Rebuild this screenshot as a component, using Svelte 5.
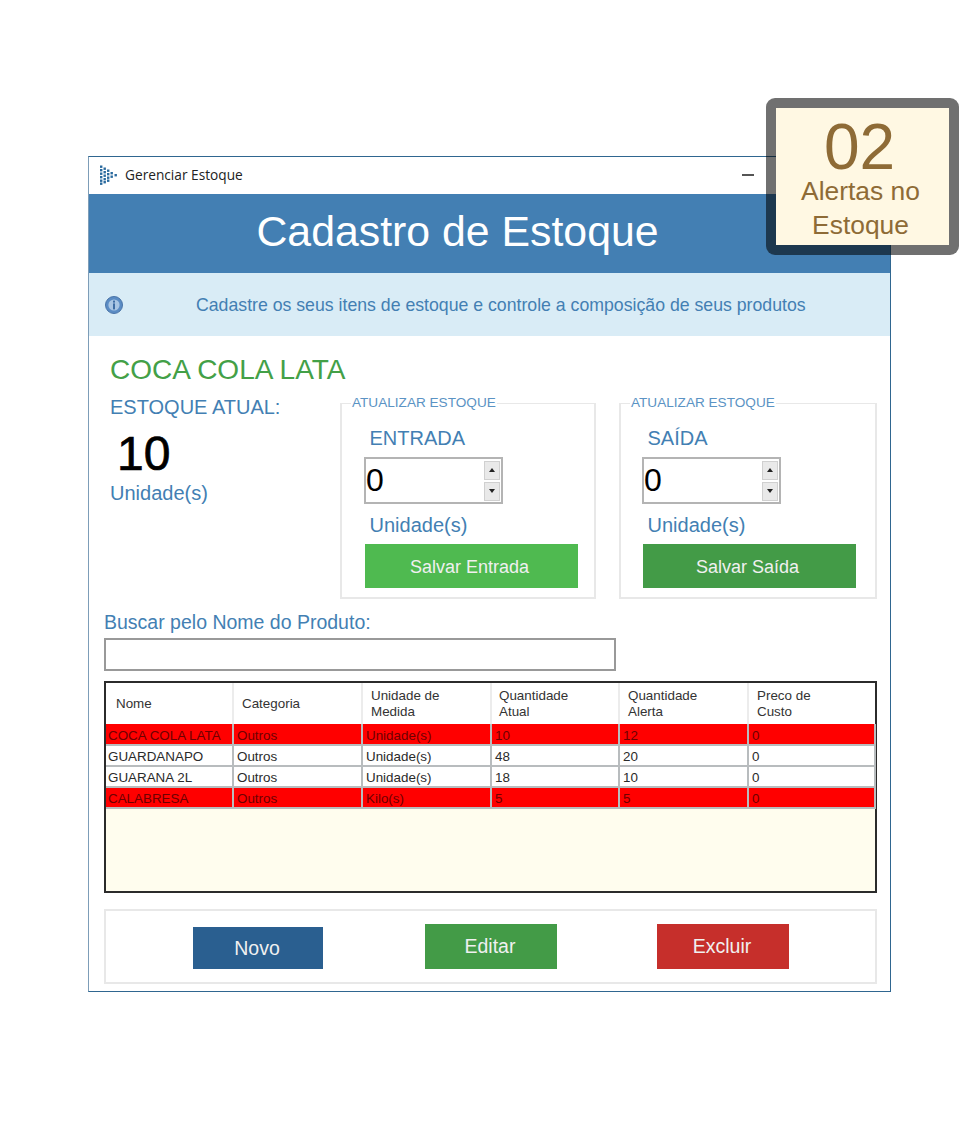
<script>
	const rows = [
		{ nome: 'COCA COLA LATA', categoria: 'Outros', unidade: 'Unidade(s)', atual: 10, alerta: 12, custo: 0, low: true },
		{ nome: 'GUARDANAPO', categoria: 'Outros', unidade: 'Unidade(s)', atual: 48, alerta: 20, custo: 0, low: false },
		{ nome: 'GUARANA 2L', categoria: 'Outros', unidade: 'Unidade(s)', atual: 18, alerta: 10, custo: 0, low: false },
		{ nome: 'CALABRESA', categoria: 'Outros', unidade: 'Kilo(s)', atual: 5, alerta: 5, custo: 0, low: true }
	];

	const groups = [
		{ label: 'ENTRADA', button: 'Salvar Entrada', tone: 'light' },
		{ label: 'SAÍDA', button: 'Salvar Saída', tone: 'dark' }
	];

	// dots of the little triangular logo in the title bar
	const dots = [
		[1, 0.5], [1, 4], [1, 7.5], [1, 11], [1, 14.5], [1, 17.5],
		[4.5, 2.5], [4.5, 6], [4.5, 9.5], [4.5, 13], [4.5, 16],
		[8, 4.5], [8, 8], [8, 11.5], [8, 14.5],
		[11.5, 7], [11.5, 10.5], [15.5, 9]
	];
</script>

<div class="page">
	<div class="window">
		<div class="titlebar">
			<svg class="logo" width="18" height="20" viewBox="0 0 18 20">
				{#each dots as [x, y]}
					<rect x={x} y={y} width="2.4" height="2.4" fill="#2a6a9e" />
				{/each}
			</svg>
			<span class="title">Gerenciar Estoque</span>
			<span class="minimize"></span>
		</div>

		<header class="banner">Cadastro de Estoque</header>

		<div class="info">
			<svg class="info-icon" width="18" height="18" viewBox="0 0 18 18">
				<circle cx="9" cy="9" r="8.5" fill="#5b8cc4" stroke="#4a74a8" />
				<circle cx="9" cy="9" r="5.6" fill="#a9c6e4" />
				<rect x="8" y="4.6" width="2" height="2" fill="#3f6ea5" />
				<rect x="8" y="7.4" width="2" height="6" fill="#3f6ea5" />
			</svg>
			<p>Cadastre os seus itens de estoque e controle a composição de seus produtos</p>
		</div>

		<main class="content">
			<div class="top">
				<section class="current">
					<h2>COCA COLA LATA</h2>
					<div class="current-label">ESTOQUE ATUAL:</div>
					<div class="current-value">10</div>
					<div class="current-unit">Unidade(s)</div>
				</section>

				{#each groups as group}
					<fieldset class="group">
						<legend>ATUALIZAR ESTOQUE</legend>
						<div class="group-label">{group.label}</div>
						<div class="spinner">
							<span class="spinner-value">0</span>
							<span class="spinner-buttons">
								<span class="spin"><i class="up"></i></span>
								<span class="spin"><i class="down"></i></span>
							</span>
						</div>
						<div class="group-label unit">Unidade(s)</div>
						<button class="save {group.tone}">{group.button}</button>
					</fieldset>
				{/each}
			</div>

			<label class="search-label" for="busca">Buscar pelo Nome do Produto:</label>
			<input id="busca" class="search" type="text" />

			<div class="grid">
				<table>
					<thead>
						<tr>
							<th class="pad">Nome</th>
							<th>Categoria</th>
							<th>Unidade de<br />Medida</th>
							<th>Quantidade<br />Atual</th>
							<th>Quantidade<br />Alerta</th>
							<th>Preco de<br />Custo</th>
						</tr>
					</thead>
					<tbody>
						{#each rows as row}
							<tr class:low={row.low}>
								<td>{row.nome}</td>
								<td>{row.categoria}</td>
								<td>{row.unidade}</td>
								<td>{row.atual}</td>
								<td>{row.alerta}</td>
								<td>{row.custo}</td>
							</tr>
						{/each}
					</tbody>
				</table>
			</div>

			<div class="actions">
				<button class="action novo">Novo</button>
				<button class="action editar">Editar</button>
				<button class="action excluir">Excluir</button>
			</div>
		</main>

		<aside class="alert">
			<div class="alert-count">02</div>
			<div class="alert-text">Alertas no<br />Estoque</div>
		</aside>
	</div>
</div>

<style>
	:global(body) {
		margin: 0;
		background: #fff;
	}

	.page {
		width: 960px;
		height: 1147px;
		padding: 156px 0 0 88px;
		box-sizing: border-box;
		font-family: 'Liberation Sans', Arial, sans-serif;
		overflow: hidden;
	}

	.window {
		position: relative;
		width: 803px;
		height: 836px;
		box-sizing: border-box;
		border: 1px solid #2f6690;
		border-left-color: #7d9db8;
		background: #fff;
	}

	.titlebar {
		display: flex;
		align-items: center;
		height: 37px;
		padding: 0 0 2px 10px;
		box-sizing: border-box;
	}

	.title {
		margin-left: 8px;
		font-family: 'Open Sans', sans-serif;
		font-size: 13.7px;
		color: #222;
	}

	.minimize {
		width: 12px;
		height: 2px;
		margin-left: 499px;
		background: #555;
	}

	.banner {
		height: 79px;
		line-height: 75px;
		background: #437fb3;
		color: #fff;
		font-size: 42.8px;
		text-align: center;
		padding-right: 64px;
	}

	.info {
		display: flex;
		align-items: center;
		height: 63px;
		padding-left: 16px;
		box-sizing: border-box;
		background: #d9ecf6;
	}

	.info p {
		margin: 0 0 0 73px;
		padding-top: 2px;
		font-size: 17.7px;
		color: #437fb3;
	}

	.content {
		padding-left: 15px;
	}

	.top {
		display: flex;
		height: 266px;
	}

	.current {
		width: 236px;
		padding: 18px 0 0 6px;
		box-sizing: border-box;
		color: #437fb3;
	}

	.current h2 {
		margin: 0;
		font-size: 28px;
		font-weight: 400;
		line-height: 32px;
		color: #43a047;
		white-space: nowrap;
	}

	.current-label,
	.current-unit {
		font-size: 20px;
		line-height: 24px;
	}

	.current-label {
		margin-top: 9px;
	}

	.current-value {
		margin: 10px 0 0 7px;
		font-size: 48px;
		line-height: 50px;
		color: #000;
		-webkit-text-stroke: 0.7px #000;
	}

	.current-unit {
		margin-top: 2px;
	}

	.group {
		position: relative;
		width: 256px;
		height: 196px;
		min-width: 0;
		margin: 67px 23px 0 0;
		padding: 0 0 0 23px;
		box-sizing: border-box;
		border: 2px solid #e8e8e8;
		border-top-width: 1px;
	}

	.group + .group {
		width: 258px;
		margin-right: 0;
		padding-left: 22px;
	}

	legend {
		position: absolute;
		top: -9px;
		left: 9px;
		padding: 0 1px;
		background: #fff;
		font-size: 13.6px;
		line-height: 16px;
		color: #5b93c4;
	}

	.group-label {
		margin: 21px 0 0 4.5px;
		font-size: 20px;
		line-height: 26px;
		color: #437fb3;
	}

	.group-label.unit {
		margin-top: 8px;
	}

	.spinner {
		display: flex;
		justify-content: space-between;
		align-items: center;
		width: 139px;
		height: 47px;
		margin: 6px 0 0 -1px;
		box-sizing: border-box;
		border: 2px solid #b4b4b4;
		background: #fff;
	}

	.spinner-value {
		font-size: 32px;
		color: #000;
	}

	.spinner-buttons {
		display: flex;
		flex-direction: column;
		gap: 2px;
		margin-right: 1px;
	}

	.spin {
		display: flex;
		align-items: center;
		justify-content: center;
		width: 16px;
		height: 19px;
		background: #e9e9e9;
		border: 1px solid #d0d0d0;
		box-sizing: border-box;
	}

	.spin i {
		width: 0;
		height: 0;
		border-left: 3.5px solid transparent;
		border-right: 3.5px solid transparent;
	}

	.up {
		border-bottom: 4px solid #222;
	}

	.down {
		border-top: 4px solid #222;
	}

	.save {
		display: block;
		width: 213px;
		height: 44px;
		margin-top: 6px;
		padding: 3px 4px 0 0;
		border: 0;
		color: #f0f0f0;
		font: 18px 'Liberation Sans', Arial, sans-serif;
	}

	.save.light {
		background: #4fba50;
	}

	.save.dark {
		background: #439b47;
	}

	.search-label {
		display: block;
		margin-top: 8px;
		font-size: 19.5px;
		line-height: 24px;
		color: #437fb3;
	}

	.search {
		display: block;
		width: 512px;
		height: 33px;
		margin-top: 4px;
		padding: 0;
		box-sizing: border-box;
		border: 2px solid #999;
		background: #fff;
	}

	.grid {
		width: 773px;
		height: 212px;
		margin-top: 10px;
		box-sizing: border-box;
		border: 2px solid #2b2b2b;
		background: #fffdee;
	}

	table {
		width: 100%;
		border-collapse: collapse;
		table-layout: fixed;
		font-size: 13.4px;
		color: #2a2a2a;
	}

	th {
		box-sizing: border-box;
		width: 129px;
		height: 41px;
		padding: 0 0 0 8px;
		border-right: 2px solid #ececec;
		background: #fff;
		font-weight: 400;
		line-height: 16px;
		text-align: left;
		color: #333;
	}

	th.pad {
		width: 127px;
		padding-left: 10px;
	}

	th:nth-child(4) {
		width: 128px;
		padding-left: 7px;
	}

	th:last-child {
		width: 127px;
		border-right: 0;
	}

	td {
		height: 21px;
		padding: 2px 0 0 3px;
		border: 2px solid #b8bcbe;
		border-width: 0 2px 2px 0;
		background: #fff;
		box-sizing: border-box;
		line-height: 17px;
		white-space: nowrap;
	}

	td:first-child {
		padding-left: 2px;
	}

	.low td {
		background: #ff0000;
		color: #6e0000;
	}

	.actions {
		display: flex;
		align-items: flex-end;
		width: 773px;
		height: 75px;
		margin-top: 16px;
		padding: 0 0 13px 87px;
		box-sizing: border-box;
		border: 2px solid #e8e8e8;
	}

	.action {
		height: 45px;
		padding: 0 2px 0 0;
		border: 0;
		color: #f0f0f0;
		font: 19.5px 'Liberation Sans', Arial, sans-serif;
	}

	.novo {
		width: 130px;
		height: 42px;
		background: #2a5f90;
	}

	.editar {
		width: 132px;
		margin-left: 102px;
		background: #439b47;
	}

	.excluir {
		width: 132px;
		margin-left: 100px;
		background: #c62f2b;
	}

	.alert {
		position: absolute;
		top: -59px;
		left: 677px;
		width: 193px;
		height: 157px;
		box-sizing: border-box;
		border: 10px solid rgba(0, 0, 0, 0.56);
		border-radius: 9px;
		background: #fff8e3;
		background-clip: padding-box;
		color: #8e6b36;
		text-align: center;
		padding-right: 4px;
	}

	.alert-count {
		font-size: 64px;
		line-height: 55px;
		margin-top: 12px;
		padding-right: 2px;
	}

	.alert-text {
		font-size: 26.4px;
		line-height: 34px;
		margin-top: -1px;
	}
</style>
